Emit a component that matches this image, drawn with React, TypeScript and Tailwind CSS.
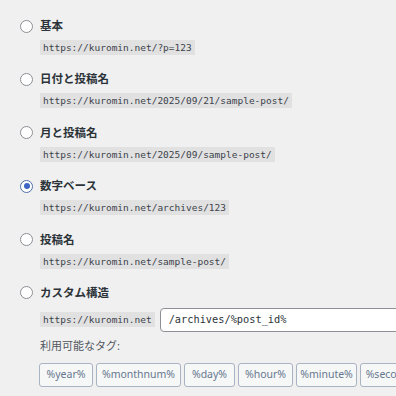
const options = [
  { id: 'plain', label: '基本', url: 'https://kuromin.net/?p=123' },
  { id: 'day', label: '日付と投稿名', url: 'https://kuromin.net/2025/09/21/sample-post/' },
  { id: 'month', label: '月と投稿名', url: 'https://kuromin.net/2025/09/sample-post/' },
  { id: 'numeric', label: '数字ベース', url: 'https://kuromin.net/archives/123', checked: true },
  { id: 'name', label: '投稿名', url: 'https://kuromin.net/sample-post/' },
]

const tags = [
  { t: '%year%', w: 'w-[54px]' },
  { t: '%monthnum%', w: 'w-[85px]' },
  { t: '%day%', w: 'w-[51px]' },
  { t: '%hour%', w: 'w-[55px]' },
  { t: '%minute%', w: 'w-[61px]' },
  { t: '%second%', w: 'w-[64px]' },
]

const jp = { fontFamily: '"Noto Sans", "Noto Sans CJK JP", sans-serif' }
const mono = { fontFamily: '"DejaVu Sans Mono", "Liberation Mono", monospace' }

function Radio({ checked }: { checked?: boolean }) {
  return (
    <span
      className={
        'flex h-[13px] w-[13px] shrink-0 items-center justify-center rounded-full border bg-white ' +
        (checked ? 'border-[#4f6fa8]' : 'border-[#8c8f94]')
      }
    >
      {checked && <span className="h-[6px] w-[6px] rounded-full bg-[#3d66c4]" />}
    </span>
  )
}

export default function App() {
  return (
    <div className="h-[396px] w-[396px] overflow-hidden bg-[#f0f0f1] pl-[20px] pt-[18px]" style={jp}>
      {options.map((o) => (
        <div key={o.id} className="flex h-[53.4px] flex-col">
          <div className="flex h-4 items-center gap-[7px]">
            <Radio checked={o.checked} />
            <span className="text-[11.5px] leading-4 font-semibold text-[#2c3338]">{o.label}</span>
          </div>
          <div className="mt-[6px] flex pl-[20px]">
            <code className="flex h-[15px] items-center bg-[#e1e1e2] px-[3px] text-[9.5px] leading-[15px] text-[#3c434a]" style={mono}>
              {o.url}
            </code>
          </div>
        </div>
      ))}

      <div className="flex h-4 items-center gap-[7px]">
        <Radio />
        <span className="text-[11.5px] leading-4 font-semibold text-[#2c3338]">カスタム構造</span>
      </div>
      <div className="mt-[7px] flex items-center gap-[5px] pl-[20px]">
        <code className="flex h-[15px] items-center bg-[#e1e1e2] px-[3px] text-[9.5px] leading-[15px] text-[#3c434a]" style={mono}>
          https://kuromin.net
        </code>
        <div className="flex h-6 w-[260px] shrink-0 items-center rounded-[4px] border border-[#8c8f94] bg-white pl-[8px] text-[10.3px] text-[#2c3338]" style={mono}>
          /archives/%post_id%
        </div>
      </div>
      <div className="mt-[3px] flex h-[22px] items-center pl-[20px] text-[11px] text-[#50575e]">利用可能なタグ:</div>
      <div className="mt-[6px] flex gap-[3px] pl-[19px]">
        {tags.map((g) => (
          <span
            key={g.t}
            className={
              'flex h-6 shrink-0 items-center justify-center rounded-[3px] border border-[#a9b3c2] bg-[#f6f7f7] text-[10.5px] text-[#66778f] ' +
              g.w
            }
          >
            {g.t}
          </span>
        ))}
      </div>
    </div>
  )
}
